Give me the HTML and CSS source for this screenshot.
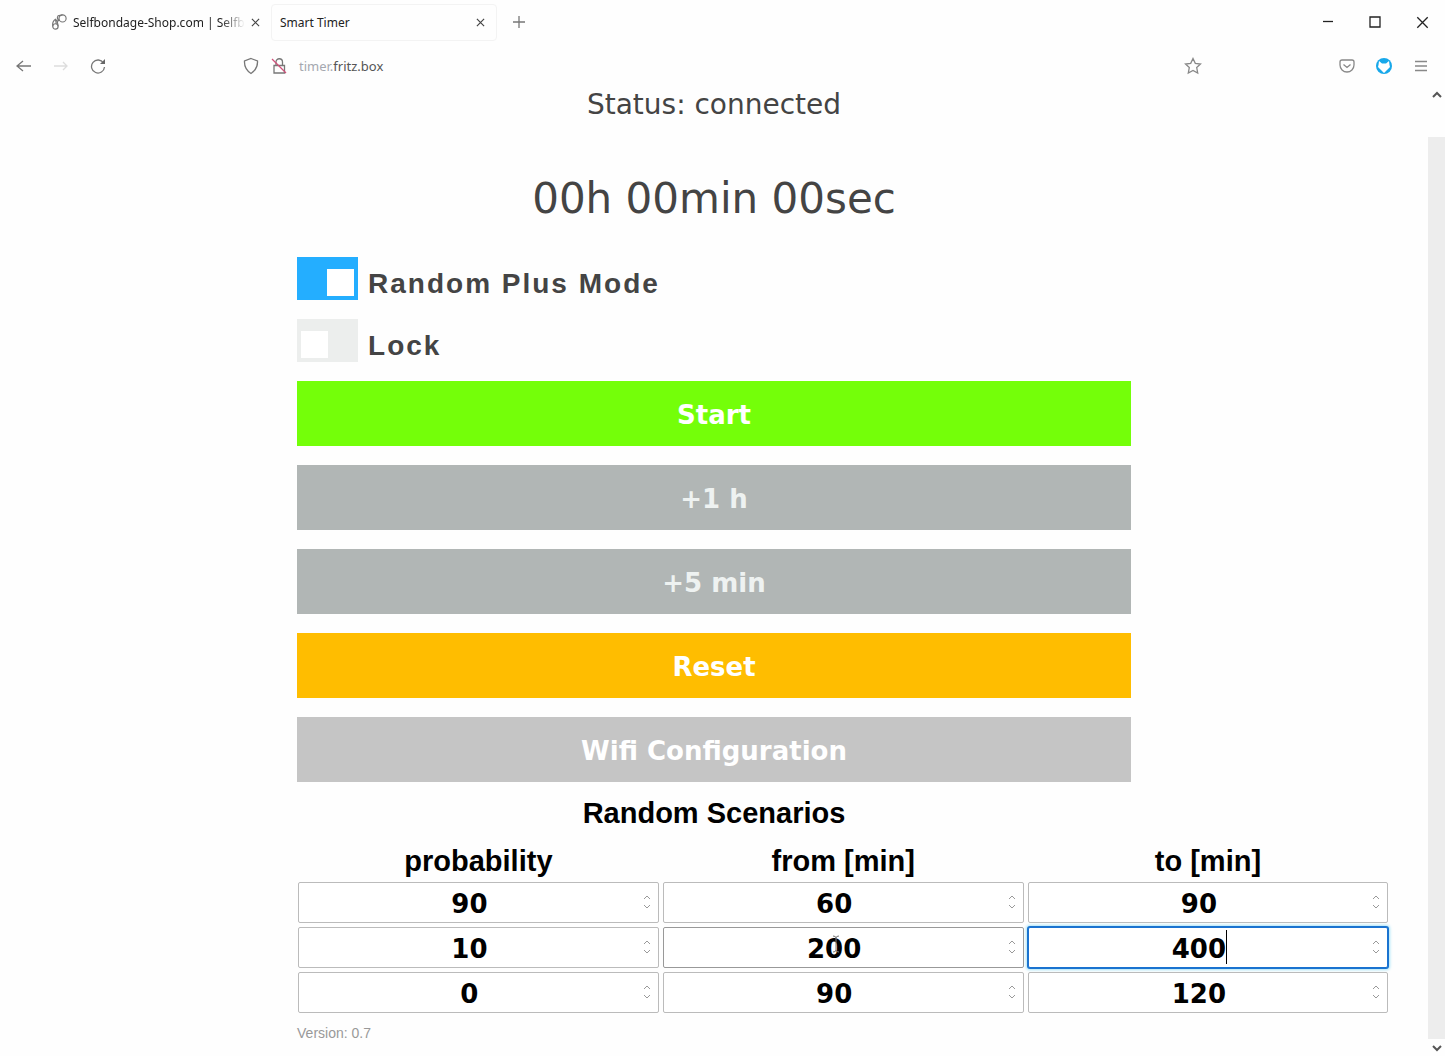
FILE: index.html
```html
<!DOCTYPE html>
<html lang="en">
<head>
    <meta charset="UTF-8">
    <meta name="viewport" content="width=device-width, initial-scale=1.0">
    <title>Smart Timer</title>
    <link rel="stylesheet" href="styles.css">
</head>
<body>

    <svg class="sprite" aria-hidden="true">
        <symbol id="icon-spin" viewBox="0 0 8 14">
            <path d="M1 4 L4 1 L7 4 M1 10 L4 13 L7 10"/>
        </symbol>
        <symbol id="icon-close" viewBox="0 0 10 10">
            <path d="M1 1 L9 9 M9 1 L1 9"/>
        </symbol>
    </svg>

    <!-- Browser window -->
    <header class="browser">
        <div class="tab-bar">
            <div class="tab">
                <svg class="favicon" viewBox="0 0 18 18">
                    <circle cx="5" cy="14" r="3"/><circle cx="13" cy="5" r="4"/>
                    <path d="M2 14 Q1 9 5 6 L7 8 L8 14 M9 7 Q6 5 8 2 L13 1 M5 6 L6 11 M7 8 L10 7"/>
                </svg>
                <a class="tab-title fade" href="#">Selfbondage-Shop.com | Selfb</a>
                <button class="icon-btn" aria-label="Close tab"><svg class="close"><use href="#icon-close"/></svg></button>
            </div>
            <div class="tab active">
                <a class="tab-title" href="#">Smart Timer</a>
                <button class="icon-btn" aria-label="Close tab"><svg class="close"><use href="#icon-close"/></svg></button>
            </div>
            <button class="icon-btn new-tab" aria-label="New tab">
                <svg width="12" height="12" viewBox="0 0 12 12"><path d="M6 0 V12 M0 6 H12"/></svg>
            </button>
            <div class="window-buttons">
                <button class="icon-btn" aria-label="Minimize"><svg width="12" height="12" viewBox="0 0 12 12"><path d="M1 5.5 H11"/></svg></button>
                <button class="icon-btn" aria-label="Maximize"><svg width="12" height="12" viewBox="0 0 12 12"><path d="M1 1 H11 V11 H1 Z"/></svg></button>
                <button class="icon-btn" aria-label="Close"><svg class="thin" width="13" height="13"><use href="#icon-close"/></svg></button>
            </div>
        </div>

        <div class="nav-bar">
            <div class="nav-buttons">
                <button class="icon-btn" aria-label="Back"><svg width="16" height="16" viewBox="0 0 16 16"><path d="M15 8 H1 M7 3 L1 8 L7 13"/></svg></button>
                <button class="icon-btn off" aria-label="Forward"><svg width="16" height="16" viewBox="0 0 16 16"><path d="M1 8 H14 M10 4 L14 8 L10 12"/></svg></button>
                <button class="icon-btn" aria-label="Reload"><svg width="16" height="16" viewBox="0 0 16 16"><path d="M13.5 5 A6.500 6.500 0 1 0 14.500 9"/><path class="fill" d="M15 1 V6 H10 Z"/></svg></button>
            </div>
            <div class="url-bar">
                <svg width="16" height="18" viewBox="0 0 16 18"><path d="M8 1.500 L14.500 4 Q15 12 8 16.500 Q1 12 1.500 4 Z"/></svg>
                <svg width="16" height="18" viewBox="0 0 16 18"><path d="M3 8.500 H13.500 V16 H3 Z M5 8 V5 A3.200 3.200 0 0 1 11.500 5 V8"/><path class="red" d="M1 2 L15 16"/></svg>
                <a class="url" href="#"><span class="sub">timer.</span>fritz.box</a>
                <button class="icon-btn star" aria-label="Bookmark"><svg width="18" height="18" viewBox="0 0 18 18"><path d="M9 1.500 L11.300 6.400 L16.500 7 L12.700 10.600 L13.700 16 L9 13.400 L4.300 16 L5.300 10.600 L1.500 7 L6.700 6.400 Z"/></svg></button>
            </div>
            <div class="nav-tools">
                <button class="icon-btn" aria-label="Pocket"><svg width="16" height="16" viewBox="0 0 16 16"><path d="M3 2 H13 Q15 2 15 4 V7 A7 7 0 0 1 1 7 V4 Q1 2 3 2 Z M4.500 6.500 L8 9.500 L11.500 6.500"/></svg></button>
                <button class="icon-btn" aria-label="Extension"><svg width="16" height="16" viewBox="0 0 16 16"><circle class="blue" cx="8" cy="8" r="8"/><path class="white" d="M3 3 L6 5.500 H10 L13 3 L13.500 7 L14 9 L11 12 L8 15 L5 12 L2 9 L2.500 7 Z"/></svg></button>
                <button class="icon-btn" aria-label="Menu"><svg width="14" height="12" viewBox="0 0 14 12"><path d="M1 1.500 H13 M1 6 H13 M1 10.500 H13"/></svg></button>
            </div>
        </div>
    </header>

    <div class="viewport">
        <main class="page">
            <div class="timer">
                <p class="status">Status: connected</p>
                <p class="clock">00h 00min 00sec</p>

                <div class="switch-row">
                    <input type="checkbox" class="switch" id="random-mode" checked>
                    <label for="random-mode">Random Plus Mode</label>
                </div>
                <div class="switch-row">
                    <input type="checkbox" class="switch" id="lock">
                    <label for="lock">Lock</label>
                </div>

                <div class="buttons">
                    <button class="btn start">Start</button>
                    <button class="btn add" disabled>+1 h</button>
                    <button class="btn add" disabled>+5 min</button>
                    <button class="btn reset">Reset</button>
                    <button class="btn wifi">Wifi Configuration</button>
                </div>

                <h2>Random Scenarios</h2>
                <table class="scenarios">
                    <thead>
                        <tr>
                            <th id="col-prob">probability</th>
                            <th id="col-from">from [min]</th>
                            <th id="col-to">to [min]</th>
                        </tr>
                    </thead>
                    <tbody>
                        <tr>
                            <td><div class="field"><input type="number" aria-labelledby="col-prob" value="90"><svg class="spin"><use href="#icon-spin"/></svg></div></td>
                            <td><div class="field"><input type="number" aria-labelledby="col-from" value="60"><svg class="spin"><use href="#icon-spin"/></svg></div></td>
                            <td><div class="field"><input type="number" aria-labelledby="col-to" value="90"><svg class="spin"><use href="#icon-spin"/></svg></div></td>
                        </tr>
                        <tr>
                            <td><div class="field"><input type="number" aria-labelledby="col-prob" value="10"><svg class="spin"><use href="#icon-spin"/></svg></div></td>
                            <td><div class="field hover"><input type="number" aria-labelledby="col-from" value="200"><svg class="spin"><use href="#icon-spin"/></svg><svg class="pointer" viewBox="0 0 8 18"><path d="M1 1 Q4 1 4 3 Q4 1 7 1 M4 3 V15 M1 17 Q4 17 4 15 Q4 17 7 17"/></svg></div></td>
                            <td><div class="field focused"><input type="number" aria-labelledby="col-to" value="400"><svg class="spin"><use href="#icon-spin"/></svg><span class="caret"></span></div></td>
                        </tr>
                        <tr>
                            <td><div class="field"><input type="number" aria-labelledby="col-prob" value="0"><svg class="spin"><use href="#icon-spin"/></svg></div></td>
                            <td><div class="field"><input type="number" aria-labelledby="col-from" value="90"><svg class="spin"><use href="#icon-spin"/></svg></div></td>
                            <td><div class="field"><input type="number" aria-labelledby="col-to" value="120"><svg class="spin"><use href="#icon-spin"/></svg></div></td>
                        </tr>
                    </tbody>
                </table>
                <p class="version">Version: 0.7</p>
            </div>
        </main>

        <div class="scrollbar">
            <svg width="10" height="8" viewBox="0 0 10 8"><path d="M1 6 L5 2 L9 6"/></svg>
            <div class="track"></div>
            <svg width="10" height="8" viewBox="0 0 10 8"><path d="M1 2 L5 6 L9 2"/></svg>
        </div>
    </div>

</body>
</html>
```
FILE: styles.css
```css
* { box-sizing: border-box; }
body { margin: 0; min-height: 100vh; display: flex; flex-direction: column; background: #fefefe; font-family: "Liberation Sans", Arial, sans-serif; }
p, h2 { margin: 0; }
a { color: inherit; text-decoration: none; }
svg { flex: none; fill: none; stroke: currentColor; stroke-width: 1.3; }
.sprite { display: none; }

/* Browser window */
.browser { font-family: "Noto Sans", sans-serif; font-size: 12px; color: #333; }
.tab-bar { display: flex; align-items: center; height: 44px; padding: 4px 15px 4px 42px; }
.tab { display: flex; align-items: center; gap: 6px; width: 226px; height: 37px; padding: 0 8px; border: 1px solid transparent; border-radius: 4px; }
.tab.active { margin-left: 3px; border-color: #f3f3f3; }
.tab-title { flex: 1; white-space: nowrap; color: #222; }
.tab-title.fade { -webkit-mask-image: linear-gradient(to right, #000 86%, transparent); mask-image: linear-gradient(to right, #000 86%, transparent); }
.favicon { width: 16px; height: 16px; color: #777; }
.icon-btn { display: flex; align-items: center; justify-content: center; width: 16px; height: 24px; padding: 0; border: none; background: none; color: #444; }
.close { width: 9px; height: 9px; }
.thin { stroke-width: 1; }
.new-tab { margin-left: 14px; color: #777; }
.window-buttons { display: flex; gap: 31px; margin-left: auto; }
.window-buttons .icon-btn { color: #222; }

.nav-bar { display: flex; align-items: center; height: 43px; padding: 0 16px; }
.nav-buttons { display: flex; gap: 21px; width: 227px; }
.nav-buttons .icon-btn { color: #777; }
.nav-buttons .off { color: #ddd; }
.url-bar { flex: 1; display: flex; align-items: center; gap: 12px; color: #777; }
.url { font-size: 13px; color: #555; }
.url .sub { color: #a5a8b0; }
.star { width: 18px; margin-left: auto; }
.nav-tools { display: flex; gap: 21px; margin-left: 137px; }
.url-bar .icon-btn, .nav-tools .icon-btn { color: #888; }
.fill { fill: #666; stroke: none; }
.red { stroke: #d0507a; }
.blue { fill: #18a8ea; stroke: none; }
.white { fill: #fff; stroke: none; }

/* Page */
.viewport { flex: 1; display: flex; }
.page { flex: 1; min-width: 0; }
.timer { width: 58.4%; margin: 0 auto; color: #444; }
.status, .clock { font-family: "DejaVu Sans", Verdana, sans-serif; text-align: center; }
.status { font-size: 28px; line-height: 36px; }
.clock { margin: 47px 0 29px; font-size: 42px; line-height: 58px; }

.switch-row { display: flex; align-items: flex-end; gap: 10px; height: 43px; margin-bottom: 19px; }
.switch-row label { font-size: 28px; line-height: 32px; font-weight: bold; letter-spacing: 2px; }
.switch { appearance: none; display: flex; align-items: flex-end; width: 61px; height: 43px; margin: 0; padding: 4px; background: #eceeed; }
.switch::before { content: ""; width: 27px; height: 27px; background: #fff; }
.switch:checked { justify-content: flex-end; background: #24aeff; }

.buttons { display: grid; gap: 19px; }
.btn { height: 65px; padding: 2px 0 0; border: none; font-family: "DejaVu Sans", Verdana, sans-serif; font-size: 26px; font-weight: bold; color: #fff; }
.start { background: #74ff09; }
.add { background: #b1b6b5; color: #eef2f1; }
.reset { background: #ffbd00; }
.wifi { background: #c5c5c5; }

h2 { margin: 14px 0; font-size: 29px; line-height: 34px; color: #000; text-align: center; }

/* The table is wider than the column above it */
.scenarios { width: 131.7%; table-layout: fixed; border-collapse: separate; border-spacing: 4px; margin: -4px -3px 0; color: #000; }
.scenarios th { height: 34px; padding: 0; font-size: 29px; line-height: 34px; }
.scenarios td { padding: 0; }
.field { position: relative; }
.field input { display: block; width: 100%; height: 41px; padding: 2px 18px 0 0; border: 1px solid #bbb; border-radius: 2px; background: #fff; font-family: "DejaVu Sans", Verdana, sans-serif; font-size: 26px; font-weight: bold; text-align: center; appearance: textfield; -moz-appearance: textfield; }
.field input::-webkit-inner-spin-button { display: none; }
.field.hover input { border-color: #999; }
.field.focused input { border-color: #1a73d0; box-shadow: 0 0 0 1px #1a73d0, 0 0 3px 2px #a8e4f8; }
.spin { position: absolute; right: 8px; top: 13px; width: 8px; height: 14px; color: #999; stroke-width: 1; }
.pointer { position: absolute; left: 47%; top: 8px; width: 8px; height: 18px; color: #777; stroke-width: 1; }
.caret { position: absolute; left: 55%; top: 3px; width: 1px; height: 34px; background: #000; }

.version { margin-top: 6px; font-size: 14px; line-height: 20px; color: #999; }

/* Scrollbar */
.scrollbar { display: flex; flex-direction: column; align-items: center; width: 17px; padding: 4px 0 4px; color: #555; }
.scrollbar svg { stroke-width: 2; }
.track { flex: 1; width: 17px; margin: 38px 0 5px; background: #ededed; }
```
